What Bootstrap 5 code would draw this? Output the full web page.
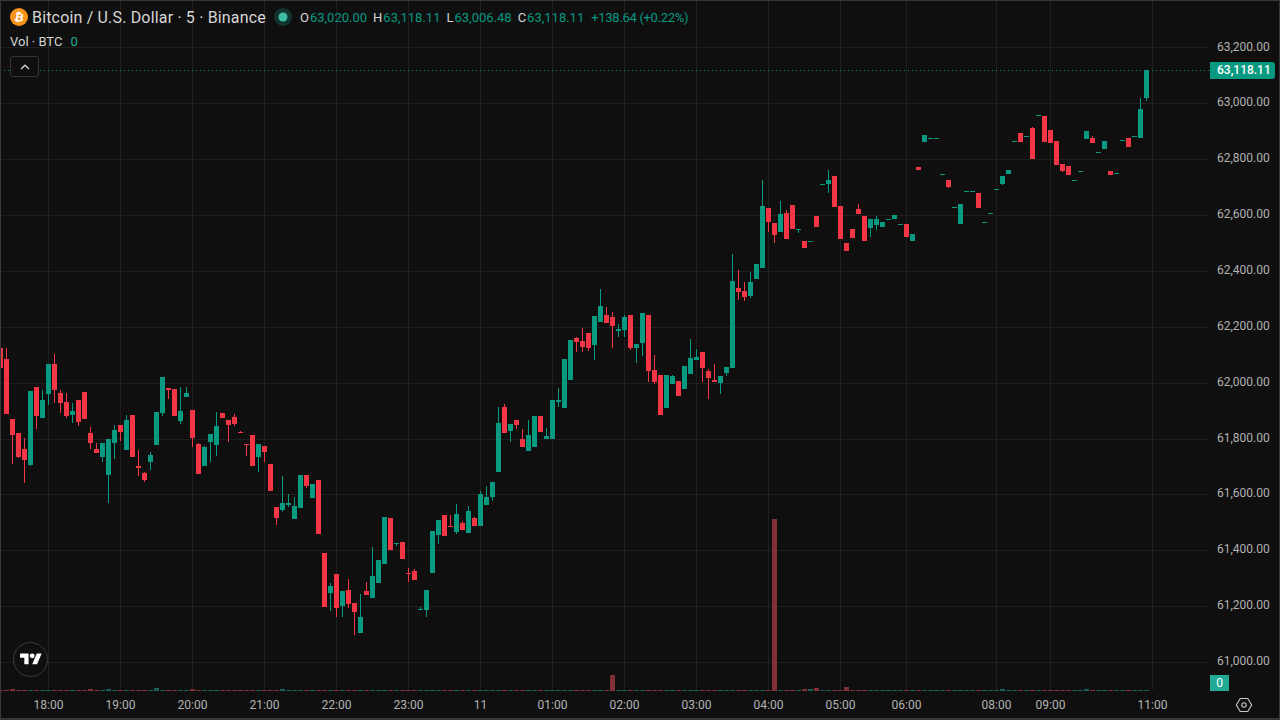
<!DOCTYPE html>
<html lang="en">
<head>
<meta charset="utf-8">
<title>BTCUSD chart</title>
<link href="https://cdn.jsdelivr.net/npm/bootstrap@5.3.0/dist/css/bootstrap.min.css" rel="stylesheet">
<style>
  html, body { height: 100%; margin: 0; background: #0f0f0f; overflow: hidden; }
  body { font-family: Roboto, "Liberation Sans", sans-serif; color: #d1d4dc; }
  .frame { width: 1280px; height: 720px; background: #0f0f0f; }
  .frame::after { content: ""; position: absolute; inset: 0; border: 1px solid #383838; border-width: 1px 1px 2px 1px; pointer-events: none; }
  .chart-row { height: 691px; }
  .pane { width: 1210px; height: 691px; }
  .pane svg { display: block; }
  .price-axis { width: 70px; padding-top: 19.6px; font-size: 12px; color: #b2b2b2; }
  .tick { height: 55.85px; line-height: 55.85px; padding-left: 7px; }
  .time-axis { height: 29px; }
  .time-axis text { font-size: 12px; fill: #b2b2b2; font-family: Roboto, "Liberation Sans", sans-serif; }
  .legend { top: 7px; left: 10px; }
  .symbol-row { height: 20px; white-space: nowrap; }
  .title { font-size: 16px; letter-spacing: .17px; color: #d6d6d6; margin-left: 4px; position: relative; top: 1px; }
  .status { margin-left: 8px; margin-right: 8px; }
  .ohlc { font-size: 13px; color: #089981; gap: 6px; position: relative; top: 1px; }
  .ohlc b { font-weight: 400; color: #d6d6d6; margin-right: 1px; }
  .change { margin-left: 1px; letter-spacing: -.3px; }
  .vol-row { font-size: 13px; height: 20px; margin-top: 5px; color: #d6d6d6; }
  .vol-row span { color: #22ab94; margin-left: 8px; }
  .collapse-btn { width: 29px; height: 21px; margin-top: 4px; background: #0f0f0f; border: 1px solid #363636; border-radius: 3px; padding: 0; line-height: 0; }
  .price-tag { top: 62px; left: 0; width: 65px; height: 17px; line-height: 17px; padding-left: 7px; font-size: 12px; font-weight: 500; color: #fff; background: #089981; border-radius: 0 3px 3px 0; }
  .vol-tag { top: 675px; left: 0; width: 19px; height: 16px; line-height: 16px; text-align: center; font-size: 12px; color: #fff; background: #22ab94; }
  .tv-badge { left: 13px; top: 642px; width: 35px; height: 35px; border: 1px solid #3d3d3d; border-radius: 50%; background: #0f0f0f; }
  .gear { right: 27px; bottom: 6px; }
</style>
</head>
<body>
<div class="frame position-relative d-flex flex-column">
  <div class="chart-row d-flex">
    <main class="pane position-relative">
      <svg id="chart" width="1210" height="691" viewBox="0 0 1210 691" shape-rendering="crispEdges"></svg>
      <div class="legend position-absolute">
        <div class="symbol-row d-flex align-items-center">
          <svg width="18" height="18" viewBox="0 0 18 18"><circle cx="9" cy="9" r="9" fill="#f7931a"/><text x="9.3" y="13" font-size="11.5" font-weight="700" text-anchor="middle" fill="#fff" font-family="DejaVu Sans, sans-serif" transform="rotate(12 9 9)">₿</text></svg>
          <span class="title">Bitcoin / U.S. Dollar · 5 · Binance</span>
          <svg class="status" width="18" height="18" viewBox="0 0 18 18"><circle cx="9" cy="9" r="9" fill="#123330"/><circle cx="9" cy="9" r="4.5" fill="#3dbea4"/></svg>
          <div class="ohlc d-flex">
            <div><b>O</b>63,020.00</div>
            <div><b>H</b>63,118.11</div>
            <div><b>L</b>63,006.48</div>
            <div><b>C</b>63,118.11</div>
            <div class="change">+138.64 (+0.22%)</div>
          </div>
        </div>
        <div class="vol-row d-flex align-items-center">Vol · BTC<span>0</span></div>
        <button class="collapse-btn btn d-flex align-items-center justify-content-center" type="button" aria-label="Collapse">
          <svg width="10" height="6" viewBox="0 0 10 6"><path d="M1 5 5 1.2 9 5" fill="none" stroke="#d6d6d6" stroke-width="1.2"/></svg>
        </button>
      </div>
      <div class="tv-badge position-absolute d-flex align-items-center justify-content-center">
        <svg width="22" height="17" viewBox="0 0 36 28" fill="#fff"><path d="M14 22H7V11H0V4h14v18zM28 22h-8l7.5-18h8L28 22z"/><circle cx="20" cy="8" r="4"/></svg>
      </div>
    </main>
    <aside class="price-axis position-relative">
      <div class="tick">63,200.00</div>
      <div class="tick">63,000.00</div>
      <div class="tick">62,800.00</div>
      <div class="tick">62,600.00</div>
      <div class="tick">62,400.00</div>
      <div class="tick">62,200.00</div>
      <div class="tick">62,000.00</div>
      <div class="tick">61,800.00</div>
      <div class="tick">61,600.00</div>
      <div class="tick">61,400.00</div>
      <div class="tick">61,200.00</div>
      <div class="tick">61,000.00</div>
      <div class="price-tag position-absolute">63,118.11</div>
      <div class="vol-tag position-absolute">0</div>
    </aside>
  </div>
  <footer class="time-axis position-relative">
    <svg width="1280" height="29" viewBox="0 0 1280 29" id="timeaxis"></svg>
    <svg class="gear position-absolute" width="18" height="18" viewBox="0 0 18 18" fill="none" stroke="#c8c8c8" stroke-width="1.1"><path d="M5.2 2.5h7.6L16.6 9l-3.8 6.5H5.2L1.4 9z"/><circle cx="9" cy="9" r="2.2"/></svg>
  </footer>
</div>
<script>
  var D = [
  ['r',348,368],['r',359,414,348],['r',419,435,0,464],['r',433,457,0,458],['r',449,460,438,483],['g',391,465,0,466],['r',387,416,0,429],['g',400,418,390],['g',364,394,0,405],['r',364,390,354,403],
  ['r',393,403,390,413],['r',402,416,393,418],['g',411,415,403,423],['r',400,422,0,426],['r',392,419],['r',433,443,427,449],['r',449,453,443],['g',443,457,0,462],['g',439,475,0,503],['g',430,443,425,459],
  ['r',425,432,0,441],['g',420,450,415],['r',415,457],['r',466,468,450,476],['r',473,480,472,482],['g',455,462,452,470],['g',412,445],['g',377,413,0,416],['r',388,390,0,399],['r',389,416],
  ['g',411,421,387,424],['g',393,397,387],['r',410,438,0,447],['r',444,474,443],['g',447,466,446],['g',434,442,0,462],['g',426,445,412,456],['r',413,418],['r',420,425,0,442],['r',417,424,414,426],
  ['r',432,433,431],['r',444,445,0,456],['r',435,466],['g',444,457,0,472],['r',446,452,0,462],['r',464,491],['r',507,518,0,525],['g',503,510,476,512],['g',503,505,494,507],['g',506,519,497],
  ['g',475,508],['r',475,486,0,488],['g',484,498],['r',480,534],['r',553,607],['g',586,593,583,611],['r',574,608,0,617],['g',591,606,0,617],['r',590,604,579,608],['r',603,612,0,635],
  ['g',617,633,594],['r',591,595,582],['g',576,598,547],['g',560,583],['g',517,564],['r',518,550],['g',543,544,0,546],['r',542,559],['r',573,574,568,582],['r',571,580,569],
  ['g',609,610,607],['g',590,610,0,617],['g',531,573],['g',520,535,0,544],['r',515,536],['r',526,527,515],['g',514,532,504,534],['r',523,530,521],['g',511,533,506],['r',518,526,517],
  ['g',494,526,491],['g',497,505,486],['g',482,497,0,501],['g',423,472,407],['r',407,433,404],['g',424,431,0,442],['r',420,425,0,429],['r',439,447,429],['g',435,451,420],['g',416,447],
  ['r',416,432],['g',436,439,428],['g',400,439],['g',400,402,388,407],['g',359,408],['g',340,380],['r',338,342,337,352],['r',341,347,328,352],['r',333,348,0,351],['g',316,345,0,360],
  ['g',306,322,289],['r',315,323,307],['r',317,326,312,348],['g',329,331,324,337],['g',317,330,315,337],['r',315,348,0,350],['g',344,348,0,363],['g',313,343,0,356],['r',315,371,0,382],['r',370,382,355,384],
  ['r',375,415],['g',375,408],['g',376,384,375],['r',381,396],['g',366,389],['g',358,374,339],['g',357,360,349],['r',352,368,0,382],['r',371,378,369,399],['r',380,382,364],
  ['g',376,383,0,394],['g',367,373,0,376],['g',281,368,254],['r',288,292,270,300],['r',291,297,282,301],['g',282,296,272,298],['g',264,279],['g',206,268,180],['r',208,222,0,232],['r',223,235,0,243],
  ['g',214,232,201],['r',213,239,210],['r',205,229],['g',229,230,0,233],['r',241,248],['g',241,242],['r',216,227],['g',184,185],['g',180,184,170,193],['r',176,207],
  ['r',206,239],['r',243,251],['r',229,238],['r',209,214,204],['r',216,241],['g',219,228,0,237],['g',219,225,216,230],['g',222,227],['g',219,220],['g',215,219],
  ['g',224,225],['r',224,237],['g',234,241],['r',167,170],['g',135,142],['g',138,139],['g',138,139],['g',174,175],['r',180,187,0,188],['g',207,208],
  ['g',204,224],['g',191,192],['g',191,192],['r',193,208],['g',222,223],['g',213,214],['g',189,190],['g',176,184,0,185],['g',170,174],['g',141,142],
  ['r',133,142],['g',136,137],['r',128,159,127],['g',115,116],['r',116,142],['r',130,143],['r',141,165],['r',164,171,0,172],['r',166,175],['g',180,181],
  ['g',171,172],['g',131,139],['r',138,143,136],['g',152,153],['g',141,149],['r',171,175],['g',173,174],['g',140,141],['r',138,147],['g',136,137],
  ['g',109,138,98],['g',70,98,0,101]
  ];
  // index in D is bar + 1; tops of the taller volume bars
  var V = {128:519, 101:675, 133:689, 134:689, 135:688, 140:687, 1:689, 14:689, 17:689, 25:688, 31:689, 46:689, 166:689, 180:689};
  var CANDLE = {r:'#f23645', g:'#089981'}, VOL = {r:'#803036', g:'#175f57'};
  var grid = '#1f1f1f', s = '';
  [48,120,192,264,336,408,480,552,624,696,768,840,906,996,1050,1152].forEach(function (x) {
    s += '<rect x="'+x+'" y="0" width="1" height="690" fill="'+grid+'"/>';
  });
  [47,103,159,215,271,327,383,439,494,550,606,662].forEach(function (y) {
    s += '<rect x="0" y="'+y+'" width="1209" height="1" fill="'+grid+'"/>';
  });
  D.forEach(function (d, k) {
    var i = k - 1, x = 4 + 6 * i, c = d[0], top = d[1], bot = d[2], wt = d[3] || top, wb = d[4] || bot;
    var vt = V[i] || 690;
    s += '<rect x="'+x+'" y="'+vt+'" width="5" height="'+(691 - vt)+'" fill="'+VOL[c]+'"/>';
    if (wt < top || wb > bot) s += '<rect x="'+(x+2)+'" y="'+wt+'" width="1" height="'+(wb-wt)+'" fill="'+CANDLE[c]+'"/>';
    s += '<rect x="'+x+'" y="'+top+'" width="5" height="'+(bot-top)+'" fill="'+CANDLE[c]+'"/>';
  });
  s += '<line x1="0" x2="1210" y1="70.5" y2="70.5" stroke="#089981" stroke-width="1" stroke-dasharray="1 3"/>';
  document.getElementById('chart').innerHTML = s;
  var T = [[48,'18:00'],[120,'19:00'],[192,'20:00'],[264,'21:00'],[336,'22:00'],[408,'23:00'],[480,'11'],[552,'01:00'],[624,'02:00'],[696,'03:00'],[768,'04:00'],[840,'05:00'],[906,'06:00'],[996,'08:00'],[1050,'09:00'],[1152,'11:00']];
  document.getElementById('timeaxis').innerHTML = T.map(function (t) {
    return '<text x="'+t[0]+'.5" y="18" text-anchor="middle">'+t[1]+'</text>';
  }).join('');
</script>
<script src="https://cdn.jsdelivr.net/npm/bootstrap@5.3.0/dist/js/bootstrap.bundle.min.js"></script>
</body>
</html>
